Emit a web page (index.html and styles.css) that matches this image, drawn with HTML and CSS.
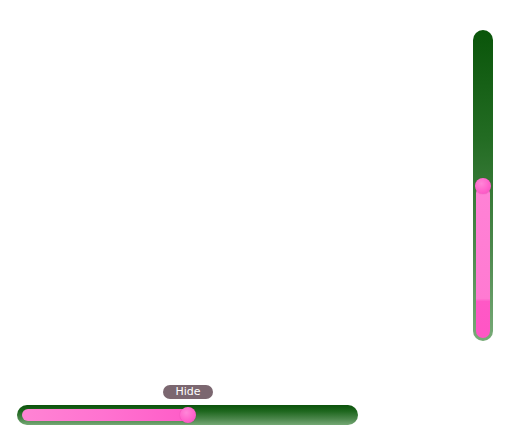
FILE: index.html
```html
<!DOCTYPE html>
<html>
<head>
<meta charset="utf-8">
<link rel="stylesheet" href="styles.css">
</head>
<body>
<div class="page">
  <div class="top-row">
    <div class="vtrack">
      <div class="vfill" style="height:152px">
        <div class="thumb vthumb"></div>
      </div>
    </div>
  </div>
  <div class="hslider">
    <div class="htrack">
      <div class="hfill" style="width:166px">
        <div class="thumb hthumb">
          <div class="tip">Hide</div>
        </div>
      </div>
    </div>
  </div>
</div>
</body>
</html>
```

FILE: styles.css
```css
html, body {
  margin: 0;
  padding: 0;
  background: #ffffff;
}
.page {
  width: 512px;
  height: 432px;
  box-sizing: border-box;
  padding: 30px 19px 7px 17px;
  display: flex;
  flex-direction: column;
  justify-content: space-between;
  font-family: "DejaVu Sans", sans-serif;
}
.top-row {
  display: flex;
  justify-content: flex-end;
}
.vtrack {
  width: 20px;
  height: 311px;
  box-sizing: border-box;
  padding: 3px;
  border-radius: 10px;
  background: linear-gradient(to bottom, #0a550a 0%, #236c23 35%, #4c884c 70%, #78ab78 100%);
  display: flex;
  flex-direction: column;
  justify-content: flex-end;
}
.vfill {
  position: relative;
  width: 14px;
  border-radius: 7px;
  background: linear-gradient(to bottom, #ff82d6 0%, #ff7ad2 74%, #ff58c6 76%, #ff55c5 100%);
}
.vthumb {
  position: absolute;
  left: -1px;
  top: -8px;
}
.thumb {
  width: 16px;
  height: 16px;
  border-radius: 50%;
  background: radial-gradient(circle at 40% 35%, #ff86d8 0%, #ff62cb 55%, #f24cbd 100%);
  box-shadow: 0 0 1px rgba(120,0,80,0.4);
}
.hslider {
  width: 341px;
}
.htrack {
  height: 20px;
  box-sizing: border-box;
  padding: 4px 5px;
  border-radius: 10px;
  background: linear-gradient(to bottom, #0b520b 0%, #1d661d 30%, #4c874c 70%, #74a874 100%);
  display: flex;
  align-items: center;
}
.hfill {
  position: relative;
  height: 12px;
  border-radius: 6px;
  background: linear-gradient(to right, #ff84d4 0%, #ff72d0 50%, #ff5cc8 100%);
}
.hthumb {
  position: absolute;
  right: -8px;
  top: -2px;
}
.tip {
  position: absolute;
  left: 50%;
  bottom: 24px;
  transform: translateX(-50%);
  width: 50px;
  height: 14px;
  border-radius: 7px;
  background: #7b6770;
  color: #ffffff;
  font-size: 11px;
  line-height: 14px;
  text-align: center;
}
```
